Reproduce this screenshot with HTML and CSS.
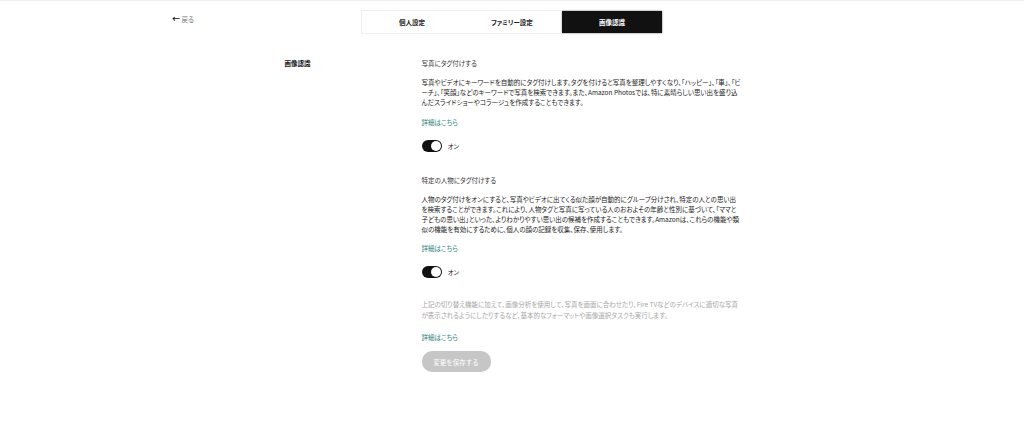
FILE: index.html
```html
<!DOCTYPE html>
<html lang="ja">
<head>
    <meta charset="UTF-8">
    <meta name="viewport" content="width=device-width, initial-scale=1.0">
    <title>画像認識</title>
    <link rel="stylesheet" href="styles.css">
</head>
<body>

    <div class="top-bar">
        <a class="back-link" href="#"><span class="back-arrow">&#8592;</span> 戻る</a>
        <div class="tabs">
            <div class="tab">個人設定</div>
            <div class="tab">ファミリー設定</div>
            <div class="tab active">画像認識</div>
        </div>
        <div></div>
    </div>

    <div class="settings">
        <div class="section-label">画像認識</div>
        <div class="section-body">

            <div class="option">
                <div class="option-title">写真にタグ付けする</div>
                <p class="option-text">写真やビデオにキーワードを自動的にタグ付けします。タグを付けると写真を整理しやすくなり、「ハッピー」、「車」、「ビーチ」、「笑顔」などのキーワードで写真を検索できます。また、Amazon Photosでは、特に素晴らしい思い出を盛り込んだスライドショーやコラージュを作成することもできます。</p>
                <a class="more-link" href="#">詳細はこちら</a>
                <div class="toggle-row">
                    <span class="toggle on"><span class="knob"></span></span>
                    <span class="toggle-label">オン</span>
                </div>
            </div>

            <div class="option">
                <div class="option-title">特定の人物にタグ付けする</div>
                <p class="option-text">人物のタグ付けをオンにすると、写真やビデオに出てくる似た顔が自動的にグループ分けされ、特定の人との思い出を検索することができます。これにより、人物タグと写真に写っている人のおおよその年齢と性別に基づいて、「ママと子どもの思い出」といった、よりわかりやすい思い出の候補を作成することもできます。Amazonは、これらの機能や類似の機能を有効にするために、個人の顔の記録を収集、保存、使用します。</p>
                <a class="more-link" href="#">詳細はこちら</a>
                <div class="toggle-row">
                    <span class="toggle on"><span class="knob"></span></span>
                    <span class="toggle-label">オン</span>
                </div>
            </div>

            <div class="option last">
                <p class="option-text muted">上記の切り替え機能に加えて、画像分析を使用して、写真を画面に合わせたり、Fire TVなどのデバイスに適切な写真が表示されるようにしたりするなど、基本的なフォーマットや画像選択タスクも実行します。</p>
                <a class="more-link" href="#">詳細はこちら</a>
            </div>

            <button class="save-button" disabled>変更を保存する</button>
        </div>
    </div>

</body>
</html>
```

FILE: styles.css
```css
body {
    font-family: 'Noto Sans CJK JP', 'Liberation Sans', sans-serif;
    font-feature-settings: "palt";
    background-color: #fff;
    color: #222;
    margin: 0;
    padding: 0;
    border-top: 1px solid #f0f0f0;
}

/* top bar */
.top-bar {
    display: grid;
    grid-template-columns: 1fr auto 1fr;
    align-items: start;
    padding-top: 9px;
}

.back-link {
    justify-self: start;
    margin-left: 172px;
    margin-top: 3px;
    font-size: 6.5px;
    color: #777;
    text-decoration: none;
}

.back-arrow {
    color: #111;
    font-weight: bold;
    font-size: 8px;
}

.tabs {
    display: flex;
    border: 1px solid #efefef;
}

.tab {
    width: 100px;
    height: 22px;
    line-height: 22px;
    text-align: center;
    font-size: 6.5px;
    font-weight: bold;
    color: #222;
}

.tab.active {
    background-color: #111;
    color: #fff;
    box-shadow: 0 0 2px rgba(0, 0, 0, 0.4);
}

/* settings */
.settings {
    width: 458px;
    margin: 22px auto 0;
    padding-left: 3px;
    display: grid;
    grid-template-columns: 137px 1fr;
}

.section-label {
    font-size: 6.5px;
    font-weight: bold;
    color: #111;
    line-height: 14px;
}

.section-body {
    width: 320px;
}

.option {
    margin-bottom: 21px;
}

.option.last {
    margin-bottom: 2px;
}

.option-title {
    font-size: 6.5px;
    color: #333;
    line-height: 14px;
}

.option-text {
    font-size: 6.5px;
    line-height: 10.2px;
    color: #222;
    margin: 7px 0 7px;
}

.option-text.muted {
    color: #a6a6a6;
    margin-top: 2px;
    margin-bottom: 10px;
}

.more-link {
    display: block;
    font-size: 6.5px;
    line-height: 14px;
    color: #2f7f7c;
    text-decoration: none;
}

.toggle-row {
    display: flex;
    align-items: center;
    gap: 6px;
    margin-top: 11px;
}

.toggle {
    display: flex;
    align-items: center;
    width: 20px;
    height: 12px;
    border-radius: 6px;
    background-color: #111;
    box-sizing: border-box;
    padding: 1px;
}

.toggle.on {
    justify-content: flex-end;
}

.knob {
    width: 10px;
    height: 10px;
    border-radius: 50%;
    background-color: #fff;
}

.toggle-label {
    font-size: 6.5px;
    color: #222;
}

.save-button {
    background-color: #c6c6c6;
    color: #fff;
    border: none;
    border-radius: 10px;
    width: 69px;
    height: 21px;
    font-family: inherit;
    font-size: 6.5px;
    padding: 0;
}
```
